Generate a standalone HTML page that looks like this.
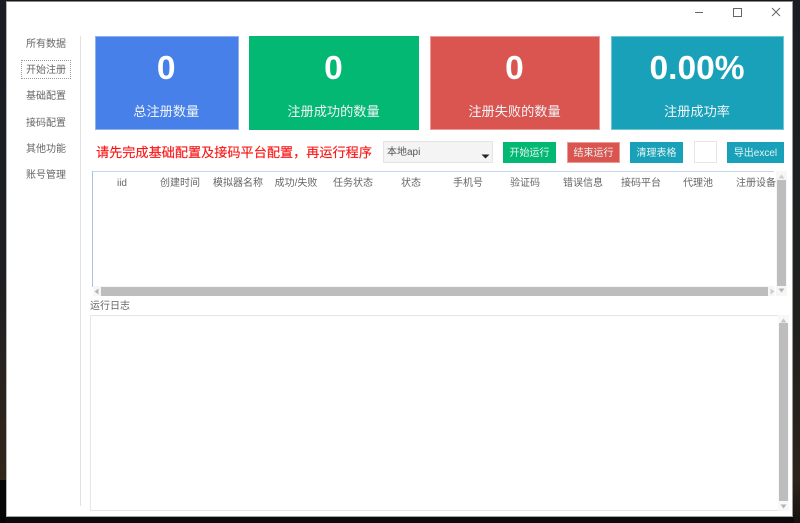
<!DOCTYPE html>
<html>
<head>
<meta charset="utf-8">
<style>
html,body{margin:0;padding:0;width:800px;height:523px;overflow:hidden;background:#14161a;}
body{position:relative;font-family:"Liberation Sans","Noto Sans CJK SC",sans-serif;color:#555;}
#w{position:absolute;left:0;top:0;width:800px;height:523px;filter:blur(0.35px);}
.a{position:absolute;}
.bgl{left:0;top:0;width:6px;height:480px;background:linear-gradient(#1a1e24 0%,#1c1e22 55%,#33261a 100%);}
.bgr{left:793px;top:0;width:7px;height:523px;background:linear-gradient(#1a1e24 0%,#20201f 60%,#2e241a 92%,#14120f 100%);}
.bgb{left:0;top:480px;width:6px;height:43px;background:#060606;}
.bgbb{left:6px;top:517px;width:788px;height:6px;background:#0a0a0a;}
.win{left:6px;top:1px;width:785px;height:514px;background:#fff;border:1px solid #b5b5b5;border-top-color:#858585;border-right-color:#999;border-bottom-color:#a5a5a5;}
.nav{left:26px;width:46px;margin-top:1px;font-size:10px;line-height:14px;color:#666;white-space:nowrap;}
.card{top:36px;height:94px;box-sizing:border-box;color:#fff;text-align:center;}
.card .n{position:absolute;left:-1px;right:0;top:12px;font-size:33.5px;font-weight:bold;line-height:40px;}
.card .t{position:absolute;left:-1px;right:0;top:66px;font-size:13.2px;line-height:18px;color:#f0f4f8;}
.btn{top:142px;height:21px;line-height:24px;box-sizing:border-box;color:#e6f4f2;font-size:10px;text-align:center;white-space:nowrap;}
.th{top:176px;margin-top:1px;font-size:10px;line-height:14px;color:#666;text-align:center;white-space:nowrap;transform:translateX(-50%);}
.sb{background:#bdbdbd;}
</style>
</head>
<body>
<div id="w">
<div class="a bgl"></div><div class="a bgr"></div><div class="a bgb"></div><div class="a bgbb"></div>
<div class="a win"></div>

<!-- window controls -->
<svg class="a" style="left:690px;top:5px" width="100" height="16" viewBox="0 0 100 16">
<path d="M5 7.5H13" stroke="#666" stroke-width="1" fill="none"/>
<rect x="43.5" y="3.5" width="8" height="8" stroke="#666" fill="none"/>
<path d="M82 3L90 11M90 3L82 11" stroke="#666" stroke-width="1" fill="none"/>
</svg>

<!-- sidebar -->
<div class="a nav" style="top:37px">所有数据</div>
<div class="a" style="left:21px;top:60px;width:50px;height:19px;box-sizing:border-box;border:1px dotted #999"></div>
<div class="a nav" style="top:63px">开始注册</div>
<div class="a nav" style="top:89px">基础配置</div>
<div class="a nav" style="top:116px">接码配置</div>
<div class="a nav" style="top:142px">其他功能</div>
<div class="a nav" style="top:168px">账号管理</div>
<div class="a" style="left:80px;top:36px;width:1px;height:470px;background:#e2e2e2"></div>

<!-- stat cards -->
<div class="a card" style="left:95px;width:143.5px;background:#4680e8;border:1px solid #8fb2ee"><div class="n">0</div><div class="t">总注册数量</div></div>
<div class="a card" style="left:249px;width:170px;background:#02b872;border:1px solid #02b872"><div class="n">0</div><div class="t">注册成功的数量</div></div>
<div class="a card" style="left:430px;width:170px;background:#da5550;border:1px solid #eb9a96"><div class="n">0</div><div class="t">注册失败的数量</div></div>
<div class="a card" style="left:611px;width:173px;background:#18a1b8;border:1px solid #6cc6d4"><div class="n">0.00%</div><div class="t">注册成功率</div></div>

<!-- toolbar -->
<div class="a" style="left:96px;top:144px;font-size:13.15px;line-height:18px;color:#f81818;white-space:nowrap;-webkit-text-stroke:0.15px #f81818;">请先完成基础配置及接码平台配置，再运行程序</div>
<div class="a" style="left:383px;top:141px;width:110px;height:22px;box-sizing:border-box;background:#f4f4f4;border:1px solid #e4e4e4;font-size:10px;line-height:22px;padding-left:3px;color:#555;">本地api</div>
<svg class="a" style="left:481px;top:154px" width="10" height="6"><path d="M0.5 0.5H8.5L4.5 4.5Z" fill="#222"/></svg>
<div class="a btn" style="left:503px;width:53px;background:#02b872;">开始运行</div>
<div class="a btn" style="left:567px;width:53px;background:#da5550;border:1px solid #eb9a96;line-height:22px;">结束运行</div>
<div class="a btn" style="left:630px;width:53px;background:#18a1b8;">清理表格</div>
<div class="a" style="left:694px;top:141px;width:23px;height:22px;box-sizing:border-box;background:#fff;border:1px solid #e6e6e6"></div>
<div class="a btn" style="left:727px;width:57px;background:#18a1b8;">导出excel</div>

<!-- table -->
<div class="a" style="left:92px;top:171px;width:682px;height:1px;background:#c5d6f4"></div>
<div class="a" style="left:92px;top:171px;width:1px;height:116px;background:#a8c0ee"></div>
<div class="a th" style="left:122px">iid</div>
<div class="a th" style="left:180px">创建时间</div>
<div class="a th" style="left:238px">模拟器名称</div>
<div class="a th" style="left:296px">成功/失败</div>
<div class="a th" style="left:353px">任务状态</div>
<div class="a th" style="left:411px">状态</div>
<div class="a th" style="left:468px">手机号</div>
<div class="a th" style="left:525px">验证码</div>
<div class="a th" style="left:583px">错误信息</div>
<div class="a th" style="left:641px">接码平台</div>
<div class="a th" style="left:698px">代理池</div>
<div class="a th" style="left:756px">注册设备</div>

<!-- table scrollbars -->
<div class="a" style="left:776px;top:171px;width:11px;height:125px;background:#f6f6f6"></div>
<svg class="a" style="left:778px;top:174px" width="8" height="5"><path d="M0.5 4.5L3.5 0.5L6.5 4.5Z" fill="#cfcfcf"/></svg>
<div class="a sb" style="left:777px;top:180px;width:9px;height:106px"></div>
<svg class="a" style="left:778px;top:288px" width="8" height="5"><path d="M0.5 0.5H6.5L3.5 4.5Z" fill="#b5b5b5"/></svg>
<div class="a" style="left:93px;top:286px;width:682px;height:10px;background:#f6f6f6"></div>
<svg class="a" style="left:94px;top:288px" width="5" height="7"><path d="M4.5 0.5V6.5L0.5 3.5Z" fill="#b5b5b5"/></svg>
<div class="a sb" style="left:101px;top:287px;width:667px;height:9px"></div>
<svg class="a" style="left:770px;top:288px" width="5" height="7"><path d="M0.5 0.5V6.5L4.5 3.5Z" fill="#cfcfcf"/></svg>

<!-- log -->
<div class="a" style="left:90px;top:300px;font-size:10px;line-height:14px;color:#666;white-space:nowrap;">运行日志</div>
<div class="a" style="left:90px;top:315px;width:689px;height:196px;box-sizing:border-box;border:1px solid #e6e6e6;"></div>
<div class="a" style="left:778px;top:315px;width:11px;height:196px;background:#f8f8f8"></div>
<svg class="a" style="left:780px;top:318px" width="8" height="5"><path d="M0.5 4.5L3.5 0.5L6.5 4.5Z" fill="#c5c5c5"/></svg>
<div class="a sb" style="left:779px;top:323px;width:9px;height:178px"></div>
<svg class="a" style="left:780px;top:504px" width="8" height="5"><path d="M0.5 0.5H6.5L3.5 4.5Z" fill="#b5b5b5"/></svg>
</div>
</body>
</html>
